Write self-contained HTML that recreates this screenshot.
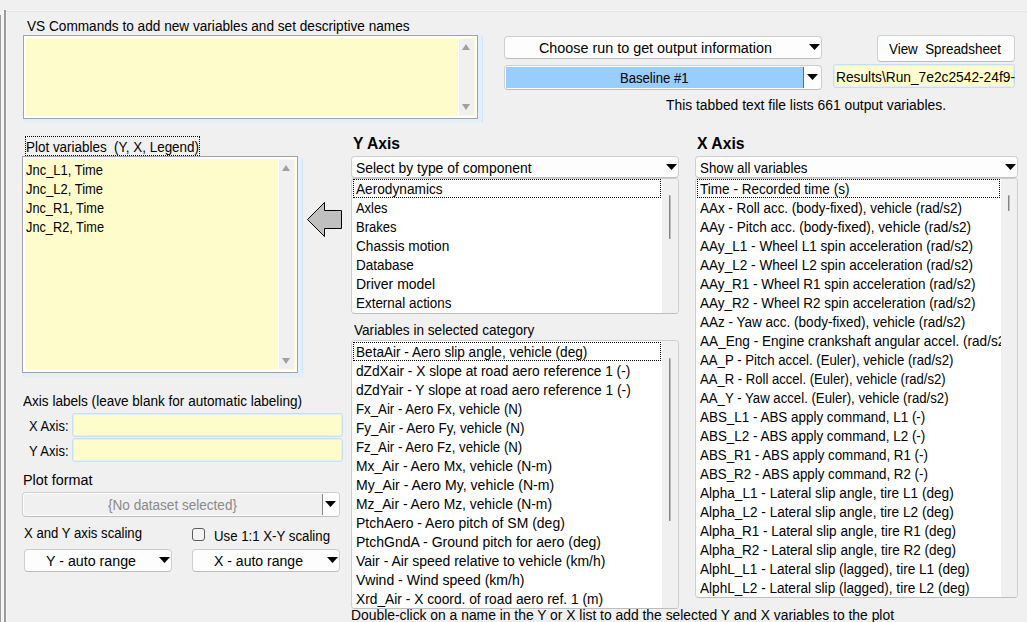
<!DOCTYPE html><html><head><meta charset="utf-8"><style>
html,body{margin:0;padding:0;width:1027px;height:622px;overflow:hidden;background:#f0f0f0}
body{position:relative;font-family:"Liberation Sans",sans-serif}
body div, body svg{position:absolute}
.t{white-space:pre;line-height:normal;color:#000;transform-origin:0 0;transform:scaleX(0.971)}
</style></head><body>
<div style="left:0px;top:15px;width:1px;height:607px;background:#9a9a9a"></div>
<div style="left:1px;top:11px;width:3px;height:611px;background:#f6f6f6"></div>
<div style="left:4px;top:10px;width:2px;height:612px;background:#9c9c9c"></div>
<div style="left:6px;top:12px;width:1px;height:610px;background:#f6f6f6"></div>
<div style="left:6px;top:11px;width:1021px;height:1px;background:#e3e3e3"></div>
<div style="left:6px;top:10px;width:1021px;height:1px;background:#f6f6f6"></div>
<div class="t" style="transform:scaleX(0.9736);left:27px;top:18.33px;font-size:14px;font-weight:400;color:#000">VS Commands to add new variables and set descriptive names</div>
<div style="left:478px;top:35px;width:5px;height:88px;background:#e3f0fb;border-right:1px solid #cfe6fb;box-sizing:border-box;border-radius:0 3px 0 0"></div>
<div style="left:23px;top:119px;width:459px;height:4px;background:#e3f0fb"></div>
<div style="left:23px;top:35px;width:455px;height:84px;background:#fffccc;border:1px solid #a2a2a8;box-shadow:inset 0 0 0 2px #fff;box-sizing:border-box"></div>
<div style="left:458px;top:39px;width:16px;height:76px;background:#f0f0f0;border-left:1px solid #fff;box-sizing:border-box"></div>
<svg style="left:462px;top:44px" width="8" height="6"><path d="M0 6H8L4.0 0Z" fill="#a0a0a0"/></svg>
<svg style="left:462px;top:104px" width="8" height="6"><path d="M0 0H8L4.0 6Z" fill="#a0a0a0"/></svg>
<div style="left:25px;top:136px;width:175px;height:20px;border:1px dotted #000;box-sizing:border-box"></div>
<div class="t" style="transform:scaleX(0.9595);left:26px;top:139.33px;font-size:14px;font-weight:400;color:#000">Plot variables&nbsp; (Y, X, Legend)</div>
<div style="left:298px;top:157px;width:5px;height:220px;background:#e3f0fb;border-right:1px solid #cfe6fb;box-sizing:border-box;border-radius:0 3px 0 0"></div>
<div style="left:22px;top:373px;width:281px;height:4px;background:#e3f0fb"></div>
<div style="left:22px;top:156px;width:276px;height:217px;background:#fffccc;border:1px solid #a2a2a8;box-shadow:inset 0 0 0 2px #fff;box-sizing:border-box"></div>
<div style="left:278px;top:160px;width:16px;height:209px;background:#f0f0f0;border-left:1px solid #fff;box-sizing:border-box"></div>
<svg style="left:282px;top:165px" width="8" height="6"><path d="M0 6H8L4.0 0Z" fill="#a0a0a0"/></svg>
<svg style="left:282px;top:358px" width="8" height="6"><path d="M0 0H8L4.0 6Z" fill="#a0a0a0"/></svg>
<div class="t" style="transform:scaleX(0.9248);left:26px;top:162.33px;font-size:14px;font-weight:400;color:#000">Jnc_L1, Time</div>
<div class="t" style="transform:scaleX(0.9248);left:26px;top:181.33px;font-size:14px;font-weight:400;color:#000">Jnc_L2, Time</div>
<div class="t" style="transform:scaleX(0.9113);left:26px;top:200.33px;font-size:14px;font-weight:400;color:#000">Jnc_R1, Time</div>
<div class="t" style="transform:scaleX(0.9113);left:26px;top:219.33px;font-size:14px;font-weight:400;color:#000">Jnc_R2, Time</div>
<svg style="left:300px;top:195px" width="50" height="50"><path d="M7.5 24.5 L24.5 7.5 V15.5 H41.5 V33.5 H24.5 V41.5 Z" fill="#c0c0c0" stroke="#000" stroke-width="1"/></svg>
<div class="t" style="transform:scaleX(0.9690);left:23px;top:393.33px;font-size:14px;font-weight:400;color:#000">Axis labels (leave blank for automatic labeling)</div>
<div class="t" style="transform:scaleX(0.9230);left:29px;top:418.33px;font-size:14px;font-weight:400;color:#000">X Axis:</div>
<div class="t" style="transform:scaleX(0.9284);left:29px;top:443.33px;font-size:14px;font-weight:400;color:#000">Y Axis:</div>
<div style="left:72px;top:413px;width:271px;height:24px;background:#fffccc;border:1px solid #c4dff6;box-shadow:inset 0 0 0 1px #e2effb;border-radius:3px;box-sizing:border-box"></div>
<div style="left:72px;top:438px;width:271px;height:24px;background:#fffccc;border:1px solid #c4dff6;box-shadow:inset 0 0 0 1px #e2effb;border-radius:3px;box-sizing:border-box"></div>
<div class="t" style="transform:scaleX(1.0265);left:23px;top:472.33px;font-size:14px;font-weight:400;color:#000">Plot format</div>
<div style="left:22px;top:492px;width:318px;height:25px;background:#f0f0f0;border:1px solid #cfcfcf;border-bottom-color:#bdbdbd;box-shadow:inset 0 0 0 1px #fff;border-radius:4px;box-sizing:border-box"></div>
<div style="left:323px;top:493px;width:16px;height:23px;background:#fdfdfd;border-radius:0 3px 3px 0"></div>
<div style="left:322px;top:494px;width:1px;height:21px;background:#888"></div>
<svg style="left:325px;top:501px" width="11" height="6"><path d="M0 0H11L5.5 6Z" fill="#000"/></svg>
<div class="t" style="transform:scaleX(0.9691);left:108px;top:497.33px;font-size:14px;font-weight:400;color:#8a8a8a">{No dataset selected}</div>
<div class="t" style="transform:scaleX(0.9398);left:24px;top:525.33px;font-size:14px;font-weight:400;color:#000">X and Y axis scaling</div>
<div style="left:192px;top:528px;width:13px;height:13px;background:#f4f4f4;border:1px solid #5c5c5c;border-radius:3px;box-sizing:border-box"></div>
<div class="t" style="transform:scaleX(0.9454);left:214px;top:528.33px;font-size:14px;font-weight:400;color:#000">Use 1:1 X-Y scaling</div>
<div style="left:24px;top:549px;width:148px;height:23px;background:#fdfdfd;border:1px solid #cfcfcf;border-bottom-color:#bdbdbd;border-radius:4px;box-sizing:border-box"></div>
<div class="t" style="transform:scaleX(1.0171);left:46px;top:553.33px;font-size:14px;font-weight:400;color:#000">Y - auto range</div>
<svg style="left:159px;top:557px" width="11" height="6"><path d="M0 0H11L5.5 6Z" fill="#000"/></svg>
<div style="left:192px;top:549px;width:148px;height:23px;background:#fdfdfd;border:1px solid #cfcfcf;border-bottom-color:#bdbdbd;border-radius:4px;box-sizing:border-box"></div>
<div class="t" style="transform:scaleX(1.0030);left:214px;top:553.33px;font-size:14px;font-weight:400;color:#000">X - auto range</div>
<svg style="left:327px;top:557px" width="11" height="6"><path d="M0 0H11L5.5 6Z" fill="#000"/></svg>
<div style="left:504px;top:36px;width:318px;height:23px;background:#fdfdfd;border:1px solid #cfcfcf;border-bottom-color:#bdbdbd;border-radius:4px;box-sizing:border-box"></div>
<div class="t" style="transform:scaleX(1.0252);left:539px;top:40.33px;font-size:14px;font-weight:400;color:#000">Choose run to get output information</div>
<svg style="left:809px;top:44px" width="11" height="6"><path d="M0 0H11L5.5 6Z" fill="#000"/></svg>
<div style="left:504px;top:65px;width:318px;height:25px;background:#fdfdfd;border:1px solid #cfcfcf;border-bottom-color:#bdbdbd;border-radius:4px;box-sizing:border-box"></div>
<div style="left:506px;top:67px;width:297px;height:21px;background:#99ccff"></div>
<div style="left:803px;top:67px;width:1px;height:21px;background:#6d6d6d"></div>
<svg style="left:807px;top:74px" width="11" height="6"><path d="M0 0H11L5.5 6Z" fill="#000"/></svg>
<div class="t" style="transform:scaleX(0.9362);left:620px;top:70.33px;font-size:14px;font-weight:400;color:#000">Baseline #1</div>
<div style="left:877px;top:35px;width:138px;height:27px;background:#fdfdfd;border:1px solid #cfcfcf;border-bottom-color:#bdbdbd;border-radius:4px;box-sizing:border-box"></div>
<div class="t" style="transform:scaleX(0.9551);left:889px;top:41.33px;font-size:14px;font-weight:400;color:#000">View&nbsp; Spreadsheet</div>
<div style="left:833px;top:64px;width:182px;height:24px;background:#fffccc;border:1px solid #c4dff6;box-shadow:inset 0 0 0 1px #e2effb;border-radius:3px;box-sizing:border-box"></div>
<div class="t" style="transform:scaleX(0.9828);left:836px;top:69.33px;font-size:14px;font-weight:400;color:#000">Results\Run_7e2c2542-24f9-</div>
<div class="t" style="transform:scaleX(0.9884);left:666px;top:97.33px;font-size:14px;font-weight:400;color:#000">This tabbed text file lists 661 output variables.</div>
<div class="t" style="transform:scaleX(0.9432);left:353px;top:133.98px;font-size:16.6px;font-weight:700;color:#000">Y Axis</div>
<div style="left:351px;top:156px;width:328px;height:22px;background:#fdfdfd;border:1px solid #cfcfcf;border-bottom-color:#bdbdbd;border-radius:4px;box-sizing:border-box"></div>
<div class="t" style="transform:scaleX(0.9934);left:356px;top:160.33px;font-size:14px;font-weight:400;color:#000">Select by type of component</div>
<svg style="left:666px;top:164px" width="11" height="6"><path d="M0 0H11L5.5 6Z" fill="#000"/></svg>
<div style="left:351px;top:178px;width:328px;height:136px;background:#fff;border:1px solid #cfcfcf;border-bottom-color:#bdbdbd;border-radius:4px;box-sizing:border-box"></div>
<div style="left:662px;top:179px;width:16px;height:134px;background:#f0f0f0;border-radius:0 3px 3px 0"></div>
<div style="left:669px;top:195px;width:2px;height:44px;background:#858585;border-radius:1px;width:1px;box-shadow:1px 0 0 #bdbdbd"></div>
<div style="left:353px;top:179px;width:308px;height:19px;border:1px dotted #000;box-sizing:border-box"></div>
<div class="t" style="transform:scaleX(0.9763);left:356px;top:181.33px;font-size:14px;font-weight:400;color:#000">Aerodynamics</div>
<div class="t" style="transform:scaleX(0.9201);left:356px;top:200.33px;font-size:14px;font-weight:400;color:#000">Axles</div>
<div class="t" style="transform:scaleX(0.9317);left:356px;top:219.33px;font-size:14px;font-weight:400;color:#000">Brakes</div>
<div class="t" style="transform:scaleX(0.9749);left:356px;top:238.33px;font-size:14px;font-weight:400;color:#000">Chassis motion</div>
<div class="t" style="transform:scaleX(0.9660);left:356px;top:257.33px;font-size:14px;font-weight:400;color:#000">Database</div>
<div class="t" style="transform:scaleX(0.9980);left:356px;top:276.33px;font-size:14px;font-weight:400;color:#000">Driver model</div>
<div class="t" style="transform:scaleX(0.9587);left:356px;top:295.33px;font-size:14px;font-weight:400;color:#000">External actions</div>
<div class="t" style="left:354px;top:322.33px;font-size:14px;font-weight:400;color:#000">Variables in selected category</div>
<div style="left:351px;top:340px;width:328px;height:269px;background:#fff;border:1px solid #cfcfcf;border-bottom-color:#bdbdbd;border-radius:4px;box-sizing:border-box"></div>
<div style="left:662px;top:341px;width:16px;height:267px;background:#f0f0f0;border-radius:0 3px 3px 0"></div>
<div style="left:669px;top:358px;width:2px;height:163px;background:#858585;border-radius:1px;width:1px;box-shadow:1px 0 0 #bdbdbd"></div>
<div style="left:353px;top:342px;width:308px;height:19px;border:1px dotted #000;box-sizing:border-box"></div>
<div class="t" style="transform:scaleX(0.9713);left:356px;top:344.33px;font-size:14px;font-weight:400;color:#000">BetaAir - Aero slip angle, vehicle (deg)</div>
<div class="t" style="transform:scaleX(0.9792);left:356px;top:363.33px;font-size:14px;font-weight:400;color:#000">dZdXair - X slope at road aero reference 1 (-)</div>
<div class="t" style="transform:scaleX(0.9864);left:356px;top:382.33px;font-size:14px;font-weight:400;color:#000">dZdYair - Y slope at road aero reference 1 (-)</div>
<div class="t" style="transform:scaleX(0.9458);left:356px;top:401.33px;font-size:14px;font-weight:400;color:#000">Fx_Air - Aero Fx, vehicle (N)</div>
<div class="t" style="transform:scaleX(0.9635);left:356px;top:420.33px;font-size:14px;font-weight:400;color:#000">Fy_Air - Aero Fy, vehicle (N)</div>
<div class="t" style="transform:scaleX(0.9458);left:356px;top:439.33px;font-size:14px;font-weight:400;color:#000">Fz_Air - Aero Fz, vehicle (N)</div>
<div class="t" style="transform:scaleX(0.9881);left:356px;top:458.33px;font-size:14px;font-weight:400;color:#000">Mx_Air - Aero Mx, vehicle (N-m)</div>
<div class="t" style="transform:scaleX(1.0044);left:356px;top:477.33px;font-size:14px;font-weight:400;color:#000">My_Air - Aero My, vehicle (N-m)</div>
<div class="t" style="transform:scaleX(0.9881);left:356px;top:496.33px;font-size:14px;font-weight:400;color:#000">Mz_Air - Aero Mz, vehicle (N-m)</div>
<div class="t" style="transform:scaleX(0.9975);left:356px;top:515.33px;font-size:14px;font-weight:400;color:#000">PtchAero - Aero pitch of SM (deg)</div>
<div class="t" style="transform:scaleX(1.0026);left:356px;top:534.33px;font-size:14px;font-weight:400;color:#000">PtchGndA - Ground pitch for aero (deg)</div>
<div class="t" style="transform:scaleX(0.9961);left:356px;top:553.33px;font-size:14px;font-weight:400;color:#000">Vair - Air speed relative to vehicle (km/h)</div>
<div class="t" style="transform:scaleX(1.0020);left:356px;top:572.33px;font-size:14px;font-weight:400;color:#000">Vwind - Wind speed (km/h)</div>
<div class="t" style="transform:scaleX(0.9832);left:356px;top:591.33px;font-size:14px;font-weight:400;color:#000">Xrd_Air - X coord. of road aero ref. 1 (m)</div>
<div class="t" style="transform:scaleX(0.9901);left:351px;top:607.33px;font-size:14px;font-weight:400;color:#000">Double-click on a name in the Y or X list to add the selected Y and X variables to the plot</div>
<div class="t" style="transform:scaleX(0.9496);left:697px;top:133.98px;font-size:16.6px;font-weight:700;color:#000">X Axis</div>
<div style="left:695px;top:156px;width:323px;height:22px;background:#fdfdfd;border:1px solid #cfcfcf;border-bottom-color:#bdbdbd;border-radius:4px;box-sizing:border-box"></div>
<div class="t" style="transform:scaleX(0.9526);left:700px;top:160.33px;font-size:14px;font-weight:400;color:#000">Show all variables</div>
<svg style="left:1005px;top:164px" width="11" height="6"><path d="M0 0H11L5.5 6Z" fill="#000"/></svg>
<div style="left:695px;top:178px;width:323px;height:420px;background:#fff;border:1px solid #cfcfcf;border-bottom-color:#bdbdbd;border-radius:4px;box-sizing:border-box"></div>
<div style="left:1001px;top:179px;width:16px;height:418px;background:#f0f0f0;border-radius:0 3px 3px 0"></div>
<div style="left:1008px;top:195px;width:2px;height:16px;background:#858585;border-radius:1px;width:1px;box-shadow:1px 0 0 #bdbdbd"></div>
<div style="left:697px;top:179px;width:303px;height:19px;border:1px dotted #000;box-sizing:border-box"></div>
<div style="left:697px;top:179px;width:304px;height:418px;overflow:hidden">
<div class="t" style="transform:scaleX(0.9689);left:3px;top:1.73px;font-size:14px">Time - Recorded time (s)</div>
<div class="t" style="transform:scaleX(0.9594);left:3px;top:20.73px;font-size:14px">AAx - Roll acc. (body-fixed), vehicle (rad/s2)</div>
<div class="t" style="transform:scaleX(0.9684);left:3px;top:39.73px;font-size:14px">AAy - Pitch acc. (body-fixed), vehicle (rad/s2)</div>
<div class="t" style="transform:scaleX(0.9700);left:3px;top:58.73px;font-size:14px">AAy_L1 - Wheel L1 spin acceleration (rad/s2)</div>
<div class="t" style="transform:scaleX(0.9700);left:3px;top:77.73px;font-size:14px">AAy_L2 - Wheel L2 spin acceleration (rad/s2)</div>
<div class="t" style="transform:scaleX(0.9633);left:3px;top:96.73px;font-size:14px">AAy_R1 - Wheel R1 spin acceleration (rad/s2)</div>
<div class="t" style="transform:scaleX(0.9633);left:3px;top:115.73px;font-size:14px">AAy_R2 - Wheel R2 spin acceleration (rad/s2)</div>
<div class="t" style="transform:scaleX(0.9650);left:3px;top:134.73px;font-size:14px">AAz - Yaw acc. (body-fixed), vehicle (rad/s2)</div>
<div class="t" style="left:3px;top:153.73px;font-size:14px">AA_Eng - Engine crankshaft angular accel. (rad/s2)</div>
<div class="t" style="transform:scaleX(0.9422);left:3px;top:172.73px;font-size:14px">AA_P - Pitch accel. (Euler), vehicle (rad/s2)</div>
<div class="t" style="transform:scaleX(0.9339);left:3px;top:191.73px;font-size:14px">AA_R - Roll accel. (Euler), vehicle (rad/s2)</div>
<div class="t" style="transform:scaleX(0.9424);left:3px;top:210.73px;font-size:14px">AA_Y - Yaw accel. (Euler), vehicle (rad/s2)</div>
<div class="t" style="transform:scaleX(0.9587);left:3px;top:229.73px;font-size:14px">ABS_L1 - ABS apply command, L1 (-)</div>
<div class="t" style="transform:scaleX(0.9587);left:3px;top:248.73px;font-size:14px">ABS_L2 - ABS apply command, L2 (-)</div>
<div class="t" style="transform:scaleX(0.9509);left:3px;top:267.73px;font-size:14px">ABS_R1 - ABS apply command, R1 (-)</div>
<div class="t" style="transform:scaleX(0.9509);left:3px;top:286.73px;font-size:14px">ABS_R2 - ABS apply command, R2 (-)</div>
<div class="t" style="transform:scaleX(0.9731);left:3px;top:305.73px;font-size:14px">Alpha_L1 - Lateral slip angle, tire L1 (deg)</div>
<div class="t" style="transform:scaleX(0.9731);left:3px;top:324.73px;font-size:14px">Alpha_L2 - Lateral slip angle, tire L2 (deg)</div>
<div class="t" style="transform:scaleX(0.9647);left:3px;top:343.73px;font-size:14px">Alpha_R1 - Lateral slip angle, tire R1 (deg)</div>
<div class="t" style="transform:scaleX(0.9647);left:3px;top:362.73px;font-size:14px">Alpha_R2 - Lateral slip angle, tire R2 (deg)</div>
<div class="t" style="transform:scaleX(0.9704);left:3px;top:381.73px;font-size:14px">AlphL_L1 - Lateral slip (lagged), tire L1 (deg)</div>
<div class="t" style="transform:scaleX(0.9704);left:3px;top:400.73px;font-size:14px">AlphL_L2 - Lateral slip (lagged), tire L2 (deg)</div>
</div>
</body></html>
